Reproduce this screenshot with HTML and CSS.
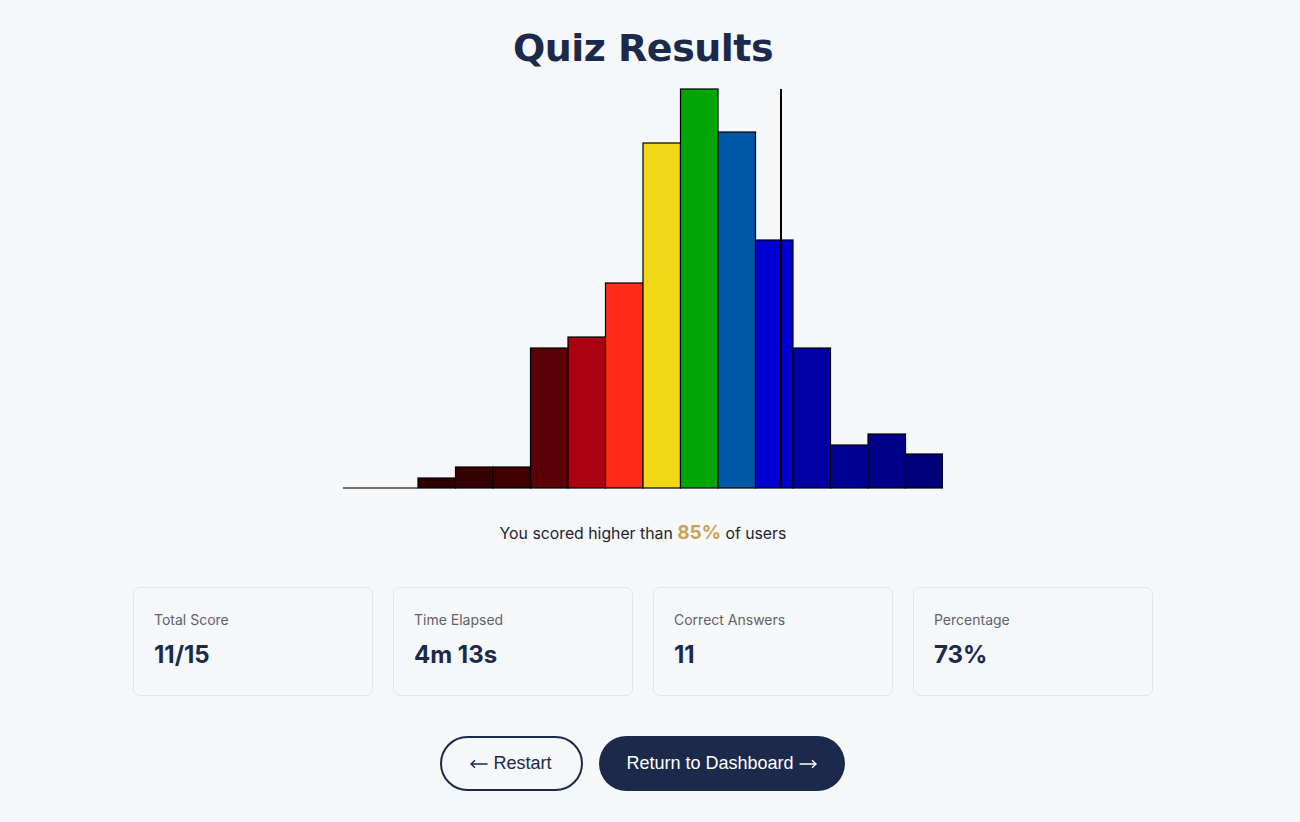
FILE: index.html
```html
<!DOCTYPE html>
<html lang="en">
<head>
  <meta charset="UTF-8">
  <meta name="viewport" content="width=device-width, initial-scale=1.0">
  <title>Quiz Results</title>
  <link rel="stylesheet" href="styles.css">
</head>
<body>
  <main class="results">
    <h1>Quiz Results</h1>

    <div class="chart">
      <svg width="600" height="402" viewBox="0 -1 600 402">
        <line x1="0" y1="400" x2="75" y2="400" stroke="#444" stroke-width="1.5"/>
        <g stroke="#000" stroke-width="1.2">
          <rect x="75"    y="390" width="37.5" height="10"  fill="#2e0000"/>
          <rect x="112.5" y="379" width="37.5" height="21"  fill="#370000"/>
          <rect x="150"   y="379" width="37.5" height="21"  fill="#3f0000"/>
          <rect x="187.5" y="260" width="37.5" height="140" fill="#5a0006"/>
          <rect x="225"   y="249" width="37.5" height="151" fill="#ad0010"/>
          <rect x="262.5" y="195" width="37.5" height="205" fill="#ff2a18"/>
          <rect x="300"   y="55"  width="37.5" height="345" fill="#f0d816"/>
          <rect x="337.5" y="1"   width="37.5" height="399" fill="#00a506"/>
          <rect x="375"   y="44"  width="37.5" height="356" fill="#0057a6"/>
          <rect x="412.5" y="152" width="37.5" height="248" fill="#0000d2"/>
          <rect x="450"   y="260" width="37.5" height="140" fill="#0000a4"/>
          <rect x="487.5" y="357" width="37.5" height="43"  fill="#000096"/>
          <rect x="525"   y="346" width="37.5" height="54"  fill="#000088"/>
          <rect x="562.5" y="366" width="37.5" height="34"  fill="#00007a"/>
        </g>
        <line x1="438" y1="1" x2="438" y2="400" stroke="#000" stroke-width="2"/>
      </svg>
    </div>

    <p class="percentile">You scored higher than <strong>85%</strong> of users</p>

    <div class="stats">
      <div class="stat-card">
        <div class="stat-label">Total Score</div>
        <div class="stat-value">11/15</div>
      </div>
      <div class="stat-card">
        <div class="stat-label">Time Elapsed</div>
        <div class="stat-value">4m 13s</div>
      </div>
      <div class="stat-card">
        <div class="stat-label">Correct Answers</div>
        <div class="stat-value">11</div>
      </div>
      <div class="stat-card">
        <div class="stat-label">Percentage</div>
        <div class="stat-value">73%</div>
      </div>
    </div>

    <div class="actions">
      <button class="btn btn-outline">
        <svg class="arrow" width="18" height="10" viewBox="0 0 18 10"><path d="M17.5 5H1M5 1.2L1 5l4 3.8" fill="none" stroke="currentColor" stroke-width="1.4"/></svg>
        Restart
      </button>
      <button class="btn btn-primary">
        Return to Dashboard
        <svg class="arrow" width="18" height="10" viewBox="0 0 18 10"><path d="M0.5 5H17M13 1.2L17 5l-4 3.8" fill="none" stroke="currentColor" stroke-width="1.4"/></svg>
      </button>
    </div>
  </main>
</body>
</html>
```

FILE: styles.css
```css
:root {
  --bg: #f6f7f9;
  --navy: #1b2a4a;
  --border: #e3e5e8;
  --muted: #5f6368;
  --gold: #c9a258;
}

body {
  margin: 0;
  padding: 0 14px 0 0;
  background: var(--bg);
  font-family: Inter, "Noto Sans", sans-serif;
  color: #1f2330;
}

.results {
  display: flex;
  flex-direction: column;
  align-items: center;
}

h1 {
  margin: 25px 0 0;
  font-family: "DejaVu Sans", sans-serif;
  font-weight: 700;
  font-size: 38px;
  line-height: 46px;
  letter-spacing: -0.5px;
  color: var(--navy);
}

.chart {
  margin-top: 16px;
  height: 402px;
}

.chart svg {
  display: block;
}

.percentile {
  margin: 32px 0 0;
  font-size: 15.8px;
  line-height: 24px;
}

.percentile strong {
  color: var(--gold);
  font-size: 19px;
  font-weight: 700;
}

.stats {
  display: grid;
  grid-template-columns: repeat(4, 240px);
  gap: 20px;
  margin-top: 41px;
}

.stat-card {
  height: 109px;
  box-sizing: border-box;
  padding: 23px 20px;
  border: 1px solid var(--border);
  border-radius: 7px;
}

.stat-label {
  font-size: 14px;
  line-height: 18px;
  color: var(--muted);
}

.stat-value {
  margin-top: 11px;
  font-size: 24px;
  font-weight: 700;
  line-height: 30px;
  color: var(--navy);
}

.actions {
  display: flex;
  gap: 16px;
  margin-top: 40px;
  margin-left: -2px;
}

.btn {
  display: flex;
  align-items: center;
  justify-content: center;
  gap: 5px;
  height: 55px;
  border-radius: 28px;
  font-family: "Liberation Sans", Arial, sans-serif;
  font-size: 18px;
  cursor: pointer;
}

.arrow {
  display: block;
  margin-top: 1px;
}

.btn-outline {
  width: 143px;
  background: transparent;
  border: 2px solid var(--navy);
  color: var(--navy);
}

.btn-primary {
  width: 246px;
  background: var(--navy);
  border: none;
  color: #fff;
}
```
